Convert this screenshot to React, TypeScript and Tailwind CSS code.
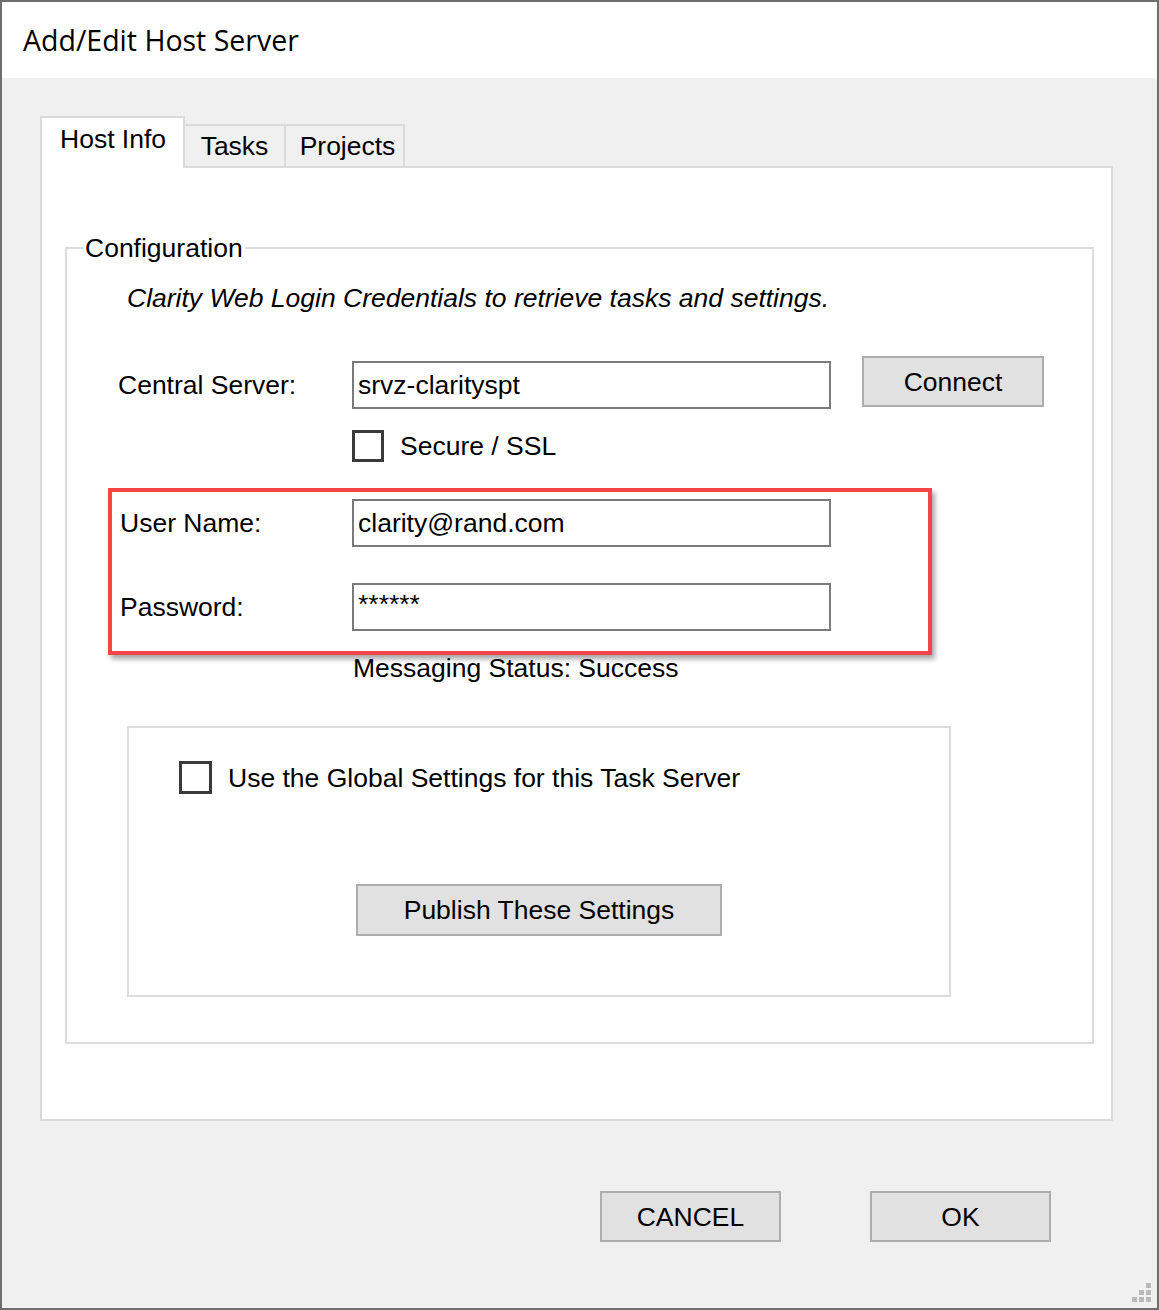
import React from 'react';

const font = { fontFamily: '"Liberation Sans", Arial, sans-serif' };

const Checkbox: React.FC<{ size?: string }> = ({ size = 'w-[32px] h-[32px]' }) => (
  <div className={`${size} shrink-0 border-[3px] border-[#3a3a3a] bg-white`} />
);

const TextBox: React.FC<{ value: string; password?: boolean }> = ({ value, password }) => (
  <div className="w-[479px] h-[48px] shrink-0 border-2 border-[#7a7a7a] bg-white flex items-center pl-[4px] text-[26.5px] leading-[30px] text-black">
    {password ? <span className="-mt-[6px]">{value}</span> : value}
  </div>
);

const Btn: React.FC<{ label: string; className?: string }> = ({ label, className }) => (
  <button className={`${className} shrink-0 bg-[#e1e1e1] border-2 border-[#adadad] text-[26.5px] leading-[30px] text-black flex items-center justify-center`}>
    {label}
  </button>
);

const ResizeGrip: React.FC = () => (
  <svg className="absolute right-[4px] bottom-[4px]" width="22" height="22" viewBox="0 0 22 22">
    {[
      [15, 1],
      [8, 8], [15, 8],
      [1, 15], [8, 15], [15, 15],
    ].map(([x, y], i) => (
      <rect key={i} x={x} y={y} width="5" height="5" fill="#b9b9b9" />
    ))}
  </svg>
);

const App: React.FC = () => {
  return (
    <div className="w-[1159px] h-[1310px] border-2 border-[#6e6e6e] flex flex-col bg-[#f0f0f0]" style={font}>
      {/* title bar */}
      <div className="h-[76px] shrink-0 bg-white flex items-center pl-[21px]">
        <span className="text-[28.5px] text-black" style={{ fontFamily: '"Open Sans", "Noto Sans", sans-serif' }}>
          Add/Edit Host Server
        </span>
      </div>

      <div className="flex-1 relative pl-[38px] pt-[38px] text-black">
        {/* tab strip */}
        <div className="flex items-end h-[52px] relative z-10 -mb-[2px]">
          <div className="w-[145px] h-[52px] bg-white border-2 border-b-0 border-[#dadada] pl-[18px] pt-[6px] text-[26.5px] leading-[30px]">
            Host Info
          </div>
          <div className="w-[101px] h-[42px] mb-[2px] bg-[#f0f0f0] border-t-2 border-r-2 border-[#dadada] flex items-center justify-center text-[26.5px] leading-[30px]">
            Tasks
          </div>
          <div className="w-[119px] h-[42px] mb-[2px] bg-[#f0f0f0] border-t-2 border-r-2 border-[#dadada] flex items-center justify-center text-[26.5px] leading-[30px] pl-[6px]">
            Projects
          </div>
        </div>

        {/* tab page */}
        <div className="w-[1073px] h-[955px] border-2 border-[#dadada] bg-white pl-[23px] pt-[79px]">
          <div className="w-[1029px] h-[797px] border-2 border-[#dcdcdc] relative text-[26.5px] leading-[30px]">
            <span className="absolute left-[16px] -top-[16px] px-[2px] bg-white">Configuration</span>

            <div className="mt-[34px] ml-[60px] italic">
              Clarity Web Login Credentials to retrieve tasks and settings.
            </div>

            <div className="mt-[48px] flex items-center">
              <div className="ml-[51px] w-[234px]">Central Server:</div>
              <TextBox value="srvz-clarityspt" />
              <Btn label="Connect" className="ml-[31px] w-[182px] h-[51px] -mt-[7px]" />
            </div>

            <div className="mt-[21px] ml-[285px] flex items-center">
              <Checkbox />
              <span className="ml-[16px]">Secure / SSL</span>
            </div>

            <div className="mt-[37px] flex items-center">
              <div className="ml-[53px] w-[232px]">User Name:</div>
              <TextBox value="clarity@rand.com" />
            </div>

            <div className="mt-[36px] flex items-center">
              <div className="ml-[53px] w-[232px]">Password:</div>
              <TextBox value="******" password />
            </div>

            <div className="mt-[22px] ml-[286px]">Messaging Status: Success</div>

            <div className="mt-[43px] ml-[60px] w-[824px] h-[271px] border-2 border-[#dcdcdc] pt-[33px] pl-[50px]">
              <div className="flex items-center">
                <Checkbox size="w-[33px] h-[33px]" />
                <span className="ml-[16px]">Use the Global Settings for this Task Server</span>
              </div>
              <div className="mt-[90px] pr-[50px] flex justify-center">
                <Btn label="Publish These Settings" className="w-[366px] h-[52px]" />
              </div>
            </div>

            {/* red annotation box */}
            <div className="absolute left-[41px] top-[239px] w-[824px] h-[167px] border-[4px] border-[#f44646] shadow-[3px_4px_5px_rgba(0,0,0,0.35)] pointer-events-none" />
          </div>
        </div>

        {/* dialog buttons */}
        <div className="mt-[70px] flex justify-end gap-[89px] pr-[106px]">
          <Btn label="CANCEL" className="w-[181px] h-[51px]" />
          <Btn label="OK" className="w-[181px] h-[51px]" />
        </div>

        <ResizeGrip />
      </div>
    </div>
  );
};

export default App;
